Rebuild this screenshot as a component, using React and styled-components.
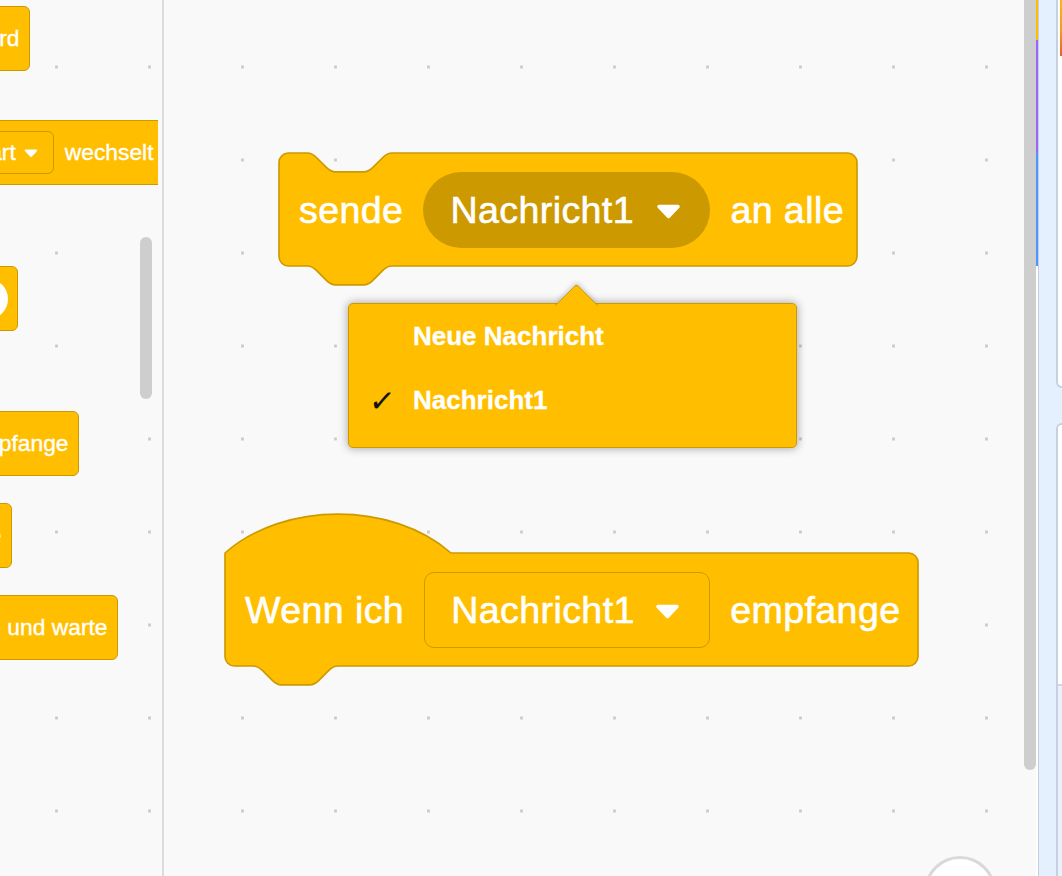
import React from 'react';
import styled, { createGlobalStyle } from 'styled-components';

const S = 2.354;
const YELLOW = '#FFBF00';
const DARK = '#CC9900';
const FONT = `"Liberation Sans", Arial, Helvetica, sans-serif`;

const Global = createGlobalStyle`
  html, body { margin: 0; padding: 0; background: #f9f9f9; }
  body { font-family: ${FONT}; }
  #root { width: 1062px; height: 876px; }
`;

const Page = styled.div`
  display: flex;
  width: 1062px;
  height: 876px;
  overflow: hidden;
  background: #e5f0ff;
`;

const Canvas = styled.div`
  flex: 0 0 1036px;
  display: flex;
  background-color: #f9f9f9;
  background-image: radial-gradient(circle, #cbcbcb 0 1.3px, rgba(203, 203, 203, 0) 2px);
  background-size: 93px 93px;
  background-position: 10px 20.5px;
`;

/* ---------- palette (flyout) ---------- */
const Palette = styled.aside`
  position: relative;
  flex: 0 0 162px;
  display: flex;
  border-right: 2px solid #dcdcdc;
`;

const Flyout = styled.div`
  position: relative;
  width: 158px;
  height: 100%;
  overflow: hidden;
`;

const PBlock = styled.div`
  position: absolute;
  top: ${(p) => p.$top}px;
  right: ${(p) => 158 - p.$edge}px;
  height: 65px;
  box-sizing: border-box;
  display: flex;
  align-items: center;
  gap: 10.5px;
  padding: 0 9.5px 0 12px;
  background: ${YELLOW};
  border: 1.5px solid ${DARK};
  border-radius: 6px;
  color: #fff;
  font-size: 22.8px;
  -webkit-text-stroke: 0.35px #fff;
  white-space: nowrap;
`;

const PField = styled.div`
  height: 43px;
  box-sizing: border-box;
  display: flex;
  align-items: center;
  gap: 8px;
  padding: 0 15.5px 0 11px;
  background: ${YELLOW};
  border: 1.5px solid ${DARK};
  border-radius: 6px;
`;

const PNum = styled.div`
  height: 40px;
  min-width: 40px;
  box-sizing: border-box;
  display: flex;
  align-items: center;
  justify-content: center;
  padding: 0 12px;
  border-radius: 20px;
  background: #fff;
  color: #575e75;
  -webkit-text-stroke: 0;
`;

const PScroll = styled.div`
  position: absolute;
  left: 140px;
  top: 237px;
  width: 12px;
  height: 162px;
  border-radius: 6px;
  background: #cecece;
`;

/* ---------- workspace ---------- */
const Workspace = styled.main`
  position: relative;
  flex: 1;
  overflow: hidden;
`;

const WBlock = styled.div`
  position: absolute;
  left: ${(p) => p.$x}px;
  top: ${(p) => p.$y}px;
  width: ${(p) => p.$w}px;
  height: 113px;
  box-sizing: border-box;
  padding-left: 20px;
  display: flex;
  align-items: center;
  gap: 20px;
  isolation: isolate;
  color: #fff;
  font-size: 37.6px;
  letter-spacing: 0.4px;
  -webkit-text-stroke: 0.6px #fff;
  white-space: nowrap;
`;

const Shape = styled.svg`
  position: absolute;
  left: 0;
  top: 0;
  z-index: -1;
  overflow: visible;
`;

const Label = styled.span`
  line-height: 1;
  margin-top: 2px;
`;

const Field = styled.div`
  width: ${(p) => p.$w}px;
  height: 76px;
  box-sizing: border-box;
  display: flex;
  align-items: center;
  justify-content: space-between;
  padding: 0 29px 0 ${(p) => (p.$open ? 27 : 26)}px;
  background: ${(p) => (p.$open ? DARK : YELLOW)};
  border: ${(p) => (p.$open ? 'none' : `1.7px solid ${DARK}`)};
  border-radius: ${(p) => (p.$open ? '38px' : '10px')};
`;

const Arrow = styled.svg`
  width: ${(p) => p.$w}px;
  height: ${(p) => p.$w * 0.6}px;
  margin-top: ${(p) => p.$dy || 0}px;
  flex: none;
`;

const Menu = styled.div`
  position: absolute;
  left: 184px;
  top: 303px;
  width: 449px;
  height: 145px;
  box-sizing: border-box;
  background: ${YELLOW};
  border: 1px solid ${DARK};
  border-radius: 5px;
  box-shadow: 0 0 8px 1px rgba(0, 0, 0, 0.3);
  z-index: 5;
`;

const MenuArrow = styled.div`
  position: absolute;
  left: 211.5px;
  top: -14.5px;
  width: 31px;
  height: 31px;
  box-sizing: border-box;
  background: ${YELLOW};
  border-top: 1px solid ${DARK};
  border-left: 1px solid ${DARK};
  border-top-left-radius: 4px;
  transform: rotate(45deg);
  box-shadow: -3px -3px 5px -2px rgba(0, 0, 0, 0.2);
`;

const MenuItem = styled.div`
  position: relative;
  height: 64px;
  display: flex;
  align-items: center;
  padding-left: 64px;
  color: #fff;
  font-weight: 700;
  font-size: 26px;
  -webkit-text-stroke: 0.3px #fff;
  white-space: nowrap;
`;

const Check = styled.span`
  position: absolute;
  left: 21px;
  top: 50%;
  transform: translateY(-46%) skewX(-8deg);
  font-family: "DejaVu Sans", sans-serif;
  font-size: 29px;
  font-weight: 400;
  color: #111;
  -webkit-text-stroke: 0.3px #111;
`;

const ZoomButton = styled.div`
  position: absolute;
  left: 759.5px;
  top: 856px;
  width: 72px;
  height: 72px;
  box-sizing: border-box;
  border-radius: 50%;
  border: 3px solid #d9d9d9;
  background: #fff;
`;

const VScroll = styled.div`
  position: absolute;
  right: 0;
  top: -10px;
  width: 12px;
  height: 780px;
  border-radius: 6px;
  background: #cecece;
`;

/* ---------- right side ---------- */
const Stripe = styled.div`
  flex: 0 0 2px;
  display: flex;
  flex-direction: column;
  background: #fff;
`;

const StripeSeg = styled.div`
  height: ${(p) => p.$h}px;
  background: ${(p) => p.$c};
`;

const Gutter = styled.div`
  flex: 0 0 18px;
  box-sizing: border-box;
  border-left: 1.5px solid #c3cde0;
  background: #e5f0ff;
`;

const RightCol = styled.div`
  flex: 1;
  display: flex;
  flex-direction: column;
`;

const PanelTop = styled.div`
  height: 388px;
  box-sizing: border-box;
  background: #fff;
  border-left: 2px solid #c6d0df;
  border-bottom: 2px solid #c6d0df;
  border-bottom-left-radius: 8px;
  overflow: hidden;
`;

const Thumb = styled.div`
  height: 56px;
  margin-left: 1.5px;
  background: linear-gradient(180deg, #fbb515 0%, #f49c1f 55%, #e5602c 100%);
`;

const PanelGap = styled.div`
  height: 35px;
`;

const PanelBottom = styled.div`
  flex: 1;
  display: flex;
  flex-direction: column;
  box-sizing: border-box;
  background: #e9f1fd;
  border-left: 2px solid #c6d0df;
  border-top: 2px solid #c6d0df;
  border-top-left-radius: 8px;
  overflow: hidden;
`;

const PanelHeader = styled.div`
  height: 259px;
  background: #fff;
  border-bottom: 2px solid #d0d7e2;
`;

/* ---------- shapes ---------- */
const NOTCH_DOWN = 'c2,0 3,1 4,2 l4,4 c1,1 2,2 4,2 h12 c2,0 3,-1 4,-2 l4,-4 c1,-1 2,-2 4,-2';
const NOTCH_BACK = 'c-2,0 -3,1 -4,2 l-4,4 c-1,1 -2,2 -4,2 h-12 c-2,0 -3,-1 -4,-2 l-4,-4 c-1,-1 -2,-2 -4,-2';

function stackPath(w, h) {
  return `M0,4 A4,4 0 0,1 4,0 H12 ${NOTCH_DOWN} H${w - 4} a4,4 0 0,1 4,4 V${h - 4} a4,4 0 0,1 -4,4 H48 ${NOTCH_BACK} H4 a4,4 0 0,1 -4,-4 Z`;
}

function hatPath(w, h) {
  return `M0,0 c25,-22 71,-22 96,0 H${w - 4} a4,4 0 0,1 4,4 V${h - 4} a4,4 0 0,1 -4,4 H48 ${NOTCH_BACK} H4 a4,4 0 0,1 -4,-4 Z`;
}

function BlockShape({ width, hat }) {
  const w = width / S;
  const h = 48;
  return (
    <Shape width={width} height={113} viewBox={`0 0 ${w} ${h}`}>
      <path
        d={hat ? hatPath(w, h) : stackPath(w, h)}
        fill={YELLOW}
        stroke={DARK}
        strokeWidth={0.7}
        strokeLinejoin="round"
      />
    </Shape>
  );
}

function DropArrow({ w, dy }) {
  return (
    <Arrow $w={w} $dy={dy} viewBox="0 0 25 15">
      <path
        d="M3,2.5 H22 L12.5,12.5 Z"
        fill="#fff"
        stroke="#fff"
        strokeWidth={3.5}
        strokeLinejoin="round"
      />
    </Arrow>
  );
}

export default function App() {
  return (
    <>
      <Global />
      <Page>
        <Canvas>
          <Palette>
            <Flyout>
              <PBlock $top={6} $edge={30}>
                <span>Wenn diese Figur angeklickt wird</span>
              </PBlock>
              <PBlock $top={120} $edge={164}>
                <span>Wenn das Bühnenbild zu</span>
                <PField>
                  <span>Start</span>
                  <DropArrow w={14} dy={1} />
                </PField>
                <span>wechselt</span>
              </PBlock>
              <PBlock $top={266} $edge={18}>
                <span>Wenn</span>
                <PField>
                  <span>Lautstärke</span>
                  <DropArrow w={14} dy={1} />
                </PField>
                <span>&gt;</span>
                <PNum>10</PNum>
              </PBlock>
              <PBlock $top={411} $edge={79}>
                <span>Wenn ich</span>
                <PField>
                  <span>Nachricht1</span>
                  <DropArrow w={14} dy={1} />
                </PField>
                <span>empfange</span>
              </PBlock>
              <PBlock $top={503} $edge={12}>
                <span>sende</span>
                <PField>
                  <span>Nachricht1</span>
                  <DropArrow w={14} dy={1} />
                </PField>
                <span>an alle</span>
              </PBlock>
              <PBlock $top={595} $edge={118}>
                <span>sende</span>
                <PField>
                  <span>Nachricht1</span>
                  <DropArrow w={14} dy={1} />
                </PField>
                <span>an alle und warte</span>
              </PBlock>
            </Flyout>
            <PScroll />
          </Palette>

          <Workspace>
            <WBlock $x={115} $y={153} $w={578}>
              <BlockShape width={578} />
              <Label>sende</Label>
              <Field $open $w={287}>
                <Label>Nachricht1</Label>
                <DropArrow w={25} dy={3} />
              </Field>
              <Label>an alle</Label>
            </WBlock>

            <Menu>
              <MenuArrow />
              <MenuItem>Neue Nachricht</MenuItem>
              <MenuItem>
                <Check>✓</Check>
                Nachricht1
              </MenuItem>
            </Menu>

            <WBlock $x={61} $y={553} $w={693}>
              <BlockShape width={693} hat />
              <Label>Wenn ich</Label>
              <Field $w={286}>
                <Label>Nachricht1</Label>
                <DropArrow w={25} dy={3} />
              </Field>
              <Label>empfange</Label>
            </WBlock>

            <ZoomButton />
            <VScroll />
          </Workspace>
        </Canvas>

        <Stripe>
          <StripeSeg $h={40} $c="#FFBF00" />
          <StripeSeg $h={113} $c="#9966FF" />
          <StripeSeg $h={113} $c="#4C97FF" />
        </Stripe>
        <Gutter />
        <RightCol>
          <PanelTop>
            <Thumb />
          </PanelTop>
          <PanelGap />
          <PanelBottom>
            <PanelHeader />
          </PanelBottom>
        </RightCol>
      </Page>
    </>
  );
}
